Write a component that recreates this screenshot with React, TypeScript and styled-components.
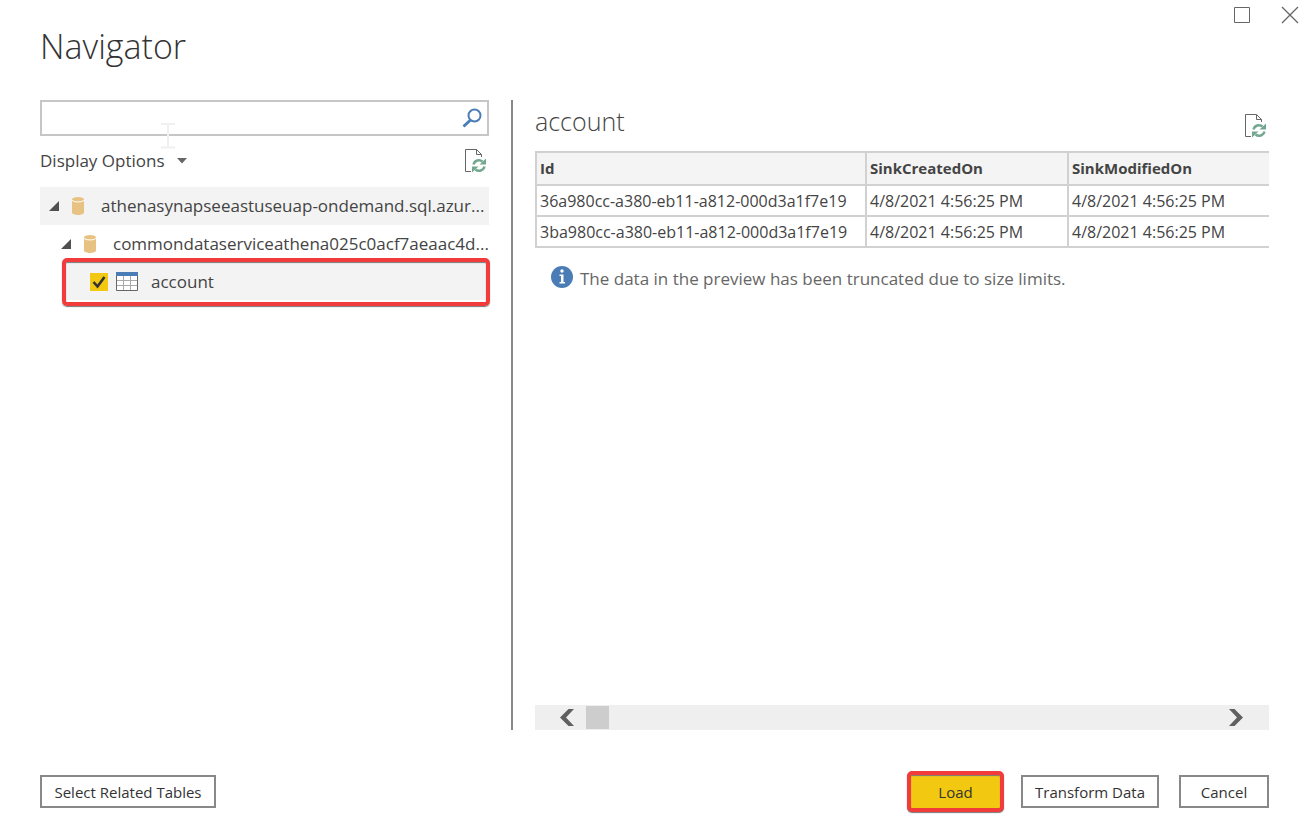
import React, { useState } from "react";
import styled, { createGlobalStyle } from "styled-components";

const GlobalStyle = createGlobalStyle`
  *, *::before, *::after { box-sizing: border-box; }
  body { margin: 0; background: #fff; }
  body, button, input, table { font-family: "Open Sans", "Noto Sans", sans-serif; }
`;

const Dialog = styled.main`
  position: relative;
  display: flex;
  flex-direction: column;
  min-height: 100vh;
  padding: 22px 38px 21px 40px;
  color: #444;
`;

const WindowControls = styled.div`
  position: absolute;
  top: 6px;
  right: 8px;
  display: flex;
  gap: 30px;
`;

const IconButton = styled.button`
  display: flex;
  flex: none;
  padding: 0;
  border: 0;
  background: none;
`;

const Title = styled.h1`
  margin: 0 0 30px;
  font-size: 34px;
  line-height: 48px;
  font-weight: 300;
  color: #333;
`;

const Body = styled.div`
  flex: 1;
  display: grid;
  grid-template-columns: minmax(0, 449fr) 2px minmax(0, 734fr);
  column-gap: 22px;
`;

const Divider = styled.div`
  background: #888;
`;

const Sidebar = styled.section`
  position: relative;
`;

const SearchBox = styled.div`
  display: flex;
  align-items: center;
  height: 36px;
  padding-right: 5px;
  border: 2px solid #c6c6c6;
`;

const SearchInput = styled.input`
  flex: 1;
  min-width: 0;
  height: 100%;
  padding: 0 8px;
  border: 0;
  outline: 0;
  background: none;
  font-size: 17px;
`;

const TextCursor = styled.svg`
  position: absolute;
  top: 23px;
  left: 121px;
`;

const OptionsBar = styled.div`
  display: flex;
  align-items: center;
  justify-content: space-between;
  height: 51px;
  padding: 0 2px 2px 0;
`;

const OptionsButton = styled.button`
  display: flex;
  align-items: center;
  gap: 12px;
  padding: 0;
  border: 0;
  background: none;
  font-size: 17px;
  line-height: 24px;
  color: #444;
`;

const Tree = styled.ul`
  margin: 0;
  padding: 0;
  list-style: none;
`;

const TreeRow = styled.li<{ $indent: number; $shaded?: boolean }>`
  position: relative;
  display: flex;
  align-items: center;
  height: 38px;
  padding-left: ${(p) => p.$indent}px;
  background: ${(p) => (p.$shaded ? "#f3f3f3" : "transparent")};
`;

const SelectedRow = styled(TreeRow)`
  height: 37px;
  margin-left: 24px;
`;

const NodeIcon = styled.svg`
  flex: none;
  margin: 0 17px 0 13px;
`;

const NodeLabel = styled.span`
  white-space: nowrap;
  font-size: 17px;
  line-height: 24px;
`;

const CheckLabel = styled.label`
  display: flex;
  align-items: center;
`;

const CheckBox = styled.input`
  appearance: none;
  width: 18px;
  height: 18px;
  margin: 0;
  background: #fff;
  border: 1px solid #888;
  &:checked {
    border: 0;
    background: #f2c811
      url("data:image/svg+xml,%3Csvg xmlns='http://www.w3.org/2000/svg' viewBox='0 0 18 18'%3E%3Cpath d='M3.5 9l4 4.500 7-9.500' fill='none' stroke='%23333' stroke-width='2.600'/%3E%3C/svg%3E");
  }
`;

const TableIcon = styled.svg`
  margin: 0 13px 0 8px;
`;

const Highlight = styled.div`
  position: absolute;
  inset: -5px -1px -6px -2px;
  border: 4px solid #f23b3b;
  border-radius: 5px;
  box-shadow: 0 1px 1px #777, inset 0 1px 1px #777;
  pointer-events: none;
`;

const Preview = styled.section`
  display: flex;
  flex-direction: column;
`;

const PreviewHeader = styled.header`
  display: flex;
  align-items: center;
  justify-content: space-between;
  height: 51px;
  padding-right: 2px;
`;

const PreviewTitle = styled.h2`
  margin: 0;
  padding-bottom: 10px;
  font-size: 25px;
  line-height: 36px;
  font-weight: 300;
`;

const DataTable = styled.table`
  width: 100%;
  table-layout: fixed;
  border-spacing: 0;
  font-size: 16px;
  line-height: 20px;
`;

const Cell = styled.td`
  height: 31px;
  padding: 0 3px;
  border: solid #d1d1d1;
  border-width: 0 0 2px 2px;
  white-space: nowrap;
`;

const HeadCell = styled.th<{ $width?: number }>`
  width: ${(p) => (p.$width ? `${p.$width}px` : "auto")};
  height: 35px;
  padding: 0 3px 2px;
  border: solid #d1d1d1;
  border-width: 2px 0 2px 2px;
  background: #f4f4f4;
  font-size: 15px;
  text-align: left;
`;

const Notice = styled.p`
  display: flex;
  align-items: flex-start;
  gap: 7px;
  margin: 18px 0 0 16px;
  font-size: 17px;
  line-height: 26px;
  color: #666;
`;

const ScrollBar = styled.div`
  display: flex;
  align-items: center;
  height: 25px;
  margin-top: auto;
  padding: 0 26px 0 25px;
  background: #efefef;
`;

const Thumb = styled.div`
  width: 23px;
  height: 23px;
  margin: 0 auto 0 12px;
  background: #cdcdcd;
`;

const Footer = styled.footer`
  display: flex;
  align-items: center;
  gap: 20px;
  padding-top: 45px;
`;

const Button = styled.button<{ $width: number; $end?: boolean }>`
  width: ${(p) => p.$width}px;
  height: 33px;
  margin-right: ${(p) => (p.$end ? "auto" : "0")};
  padding: 0;
  border: 2px solid #888;
  background: #fff;
  font-size: 15px;
  line-height: 20px;
  color: #333;
  white-space: nowrap;
`;

const PrimaryButton = styled(Button)`
  height: 41px;
  margin: -4px -3px -4px 0;
  border: 4px solid #f23b3b;
  border-radius: 5px;
  background: #f2c811;
  box-shadow: 0 1px 1px #777, inset 0 1px 1px #777;
`;

const RefreshIcon = () => (
  <svg width="23" height="24" viewBox="0 0 23 24" fill="none">
    <path d="M7 22.500H1.500V.500H12.500L17.500 5.500V8M12.500 .500V5.500H17.500" stroke="#666" />
    <path d="M9.500 15.500A5.600 5.600 0 0 1 18.500 12.500M20.500 17.500A5.600 5.600 0 0 1 11.500 20.500" stroke="#73a790" strokeWidth="2.400" />
    <path d="M22 9.500V15.500H15.500ZM8 23.500V17.500H14.500Z" fill="#73a790" />
  </svg>
);

const Chevron = ({ right = false }: { right?: boolean }) => (
  <svg width="14" height="17" viewBox="0 0 14 17">
    <path d={right ? "M0 0H5.500L14 8.500 5.500 17H0L8 8.500Z" : "M14 0H8.500L0 8.500 8.500 17H14L6 8.500Z"} fill="#606060" />
  </svg>
);

const DatabaseNode = ({ indent, label, shaded }: { indent: number; label: string; shaded?: boolean }) => (
  <TreeRow $indent={indent} $shaded={shaded}>
    <IconButton aria-label="Collapse">
      <svg width="10" height="10" viewBox="0 0 10 10">
        <path d="M10 0V10H0Z" fill="#505050" />
      </svg>
    </IconButton>
    <NodeIcon width="12" height="18" viewBox="0 0 12 18">
      <path d="M0 2.500V15.500C0 18.800 12 18.800 12 15.500V2.500Z" fill="#e8c282" />
      <ellipse cx="6" cy="2.500" rx="6" ry="2.500" fill="#e8c282" />
      <path d="M0 3C1 5.600 11 5.600 12 3" fill="none" stroke="#fff" />
    </NodeIcon>
    <NodeLabel>{label}</NodeLabel>
  </TreeRow>
);

const columns = [
  { name: "Id", width: 330 },
  { name: "SinkCreatedOn", width: 202 },
  { name: "SinkModifiedOn" },
];

const rows = [
  ["36a980cc-a380-eb11-a812-000d3a1f7e19", "4/8/2021 4:56:25 PM", "4/8/2021 4:56:25 PM"],
  ["3ba980cc-a380-eb11-a812-000d3a1f7e19", "4/8/2021 4:56:25 PM", "4/8/2021 4:56:25 PM"],
];

export default function App() {
  const [checked, setChecked] = useState(true);
  return (
    <Dialog>
      <GlobalStyle />
      <WindowControls>
        <IconButton aria-label="Maximize">
          <svg width="18" height="18" viewBox="0 0 18 18">
            <path d="M1.500 1.500H16.500V16.500H1.500Z" fill="none" stroke="#666" />
          </svg>
        </IconButton>
        <IconButton aria-label="Close">
          <svg width="18" height="18" viewBox="0 0 18 18">
            <path d="M1 1L17 17M17 1L1 17" stroke="#666" strokeWidth="1.300" />
          </svg>
        </IconButton>
      </WindowControls>
      <Title>Navigator</Title>
      <Body>
        <Sidebar>
          <SearchBox>
            <SearchInput type="text" aria-label="Search" />
            <IconButton aria-label="Search">
              <svg width="20" height="20" viewBox="0 0 20 20" fill="none" stroke="#4a7db5">
                <circle cx="12.500" cy="7.500" r="6" strokeWidth="2" />
                <path d="M8.500 12L1.500 18.500" strokeWidth="3" />
              </svg>
            </IconButton>
          </SearchBox>
          <TextCursor width="14" height="26" viewBox="0 0 14 26" fill="none">
            <path d="M0 1H14M0 24.500H14M7 1V24.500" stroke="#f0f0f0" strokeWidth="2" />
          </TextCursor>
          <OptionsBar>
            <OptionsButton>
              Display Options
              <svg width="10" height="6" viewBox="0 0 10 6">
                <path d="M0 0H10L5 5.500Z" fill="#666" />
              </svg>
            </OptionsButton>
            <IconButton aria-label="Refresh tree">
              <RefreshIcon />
            </IconButton>
          </OptionsBar>
          <Tree>
            <DatabaseNode indent={9} label="athenasynapseeastuseuap-ondemand.sql.azur..." shaded />
            <DatabaseNode indent={21} label="commondataserviceathena025c0acf7aeaac4d..." />
            <SelectedRow $indent={26} $shaded>
              <CheckLabel>
                <CheckBox type="checkbox" checked={checked} onChange={(e) => setChecked(e.target.checked)} />
                <TableIcon width="22" height="19" viewBox="0 0 22 19">
                  <path d="M.500 .500H21.500V18.500H.500Z" fill="#fff" stroke="#666" />
                  <path d="M1 8.500H21M1 13.500H21M7.500 4V18M14.500 4V18" stroke="#aaa" />
                  <path d="M0 0H22V4H0Z" fill="#4a7db5" />
                </TableIcon>
                <NodeLabel>account</NodeLabel>
              </CheckLabel>
              <Highlight />
            </SelectedRow>
          </Tree>
        </Sidebar>
        <Divider />
        <Preview>
          <PreviewHeader>
            <PreviewTitle>account</PreviewTitle>
            <IconButton aria-label="Refresh preview">
              <RefreshIcon />
            </IconButton>
          </PreviewHeader>
          <DataTable>
            <thead>
              <tr>
                {columns.map((c) => (
                  <HeadCell key={c.name} $width={c.width}>{c.name}</HeadCell>
                ))}
              </tr>
            </thead>
            <tbody>
              {rows.map((r) => (
                <tr key={r[0]}>
                  {r.map((value, i) => (
                    <Cell key={i}>{value}</Cell>
                  ))}
                </tr>
              ))}
            </tbody>
          </DataTable>
          <Notice>
            <svg width="22" height="22" viewBox="0 0 22 22">
              <circle cx="11" cy="11" r="11" fill="#4a7db5" />
              <circle cx="11" cy="5" r="1.700" fill="#fff" />
              <path d="M8.500 8.500H12.500V16H14V17.500H8.500V16H10V10H8.500Z" fill="#fff" />
            </svg>
            The data in the preview has been truncated due to size limits.
          </Notice>
          <ScrollBar>
            <IconButton aria-label="Scroll left"><Chevron /></IconButton>
            <Thumb />
            <IconButton aria-label="Scroll right"><Chevron right /></IconButton>
          </ScrollBar>
        </Preview>
      </Body>
      <Footer>
        <Button $width={176} $end>Select Related Tables</Button>
        <PrimaryButton $width={97}>Load</PrimaryButton>
        <Button $width={138}>Transform Data</Button>
        <Button $width={90}>Cancel</Button>
      </Footer>
    </Dialog>
  );
}
